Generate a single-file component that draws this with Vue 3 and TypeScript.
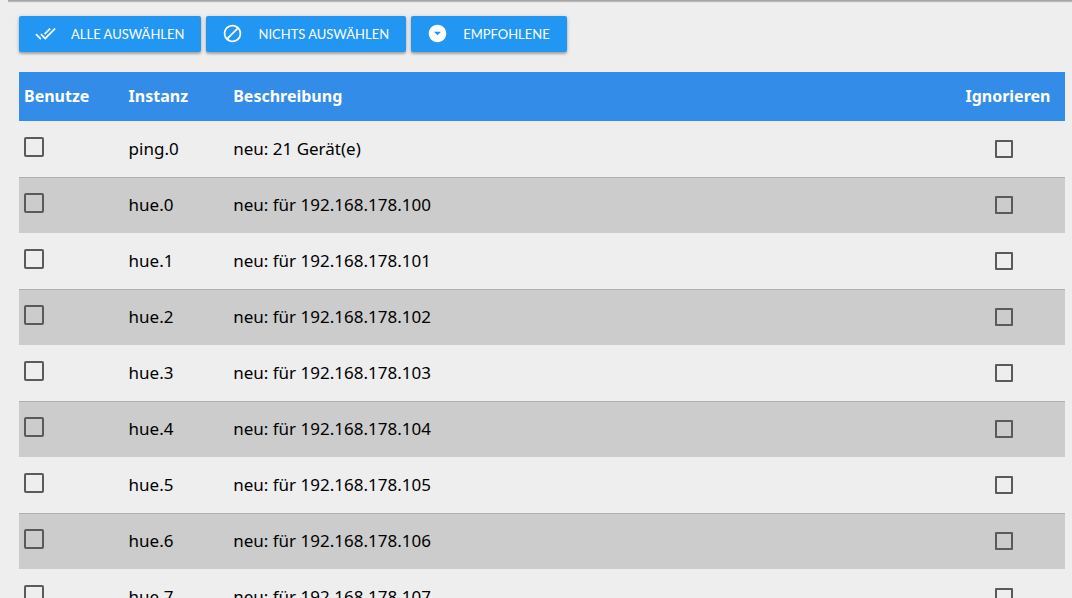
<script setup lang="ts">
import { ref } from 'vue'

interface Instance {
  id: string
  description: string
  use: boolean
  ignore: boolean
}

const makeInstance = (id: string, description: string): Instance => ({
  id,
  description,
  use: false,
  ignore: false,
})

const instances = ref<Instance[]>([
  makeInstance('ping.0', 'neu: 21 Gerät(e)'),
  ...Array.from({ length: 8 }, (_, i) => makeInstance(`hue.${i}`, `neu: für 192.168.178.${100 + i}`)),
])

function setAll(use: boolean): void {
  instances.value.forEach((item) => {
    item.use = use && !item.ignore
  })
}
</script>

<template>
  <main class="page">
    <div class="edge"></div>
    <div class="toolbar">
      <button type="button" class="btn" @click="setAll(true)">
        <svg class="icon" viewBox="0 0 24 24" aria-hidden="true">
          <path d="M18 7l-1.41-1.41-6.34 6.34 1.41 1.41L18 7zm4.24-1.41L11.66 16.17 7.48 12l-1.41 1.41L11.66 19l12-12-1.42-1.41zM.41 13.41L6 19l1.41-1.41L1.83 12 .41 13.41z" />
        </svg>
        <span>ALLE AUSWÄHLEN</span>
      </button>
      <button type="button" class="btn" @click="setAll(false)">
        <svg class="icon" viewBox="0 0 24 24" aria-hidden="true">
          <path d="M12 2C6.48 2 2 6.48 2 12s4.48 10 10 10 10-4.48 10-10S17.52 2 12 2zM4 12c0-4.42 3.58-8 8-8 1.85 0 3.55.63 4.9 1.69L5.69 16.9C4.63 15.55 4 13.85 4 12zm8 8c-1.85 0-3.55-.63-4.9-1.69L18.31 7.1C19.37 8.45 20 10.15 20 12c0 4.42-3.58 8-8 8z" />
        </svg>
        <span>NICHTS AUSWÄHLEN</span>
      </button>
      <button type="button" class="btn" @click="setAll(true)">
        <svg class="icon" viewBox="0 0 24 24" aria-hidden="true">
          <path fill-rule="evenodd" d="M12 2C6.48 2 2 6.48 2 12s4.48 10 10 10 10-4.48 10-10S17.52 2 12 2zm0 12l-4-4h8l-4 4z" />
        </svg>
        <span>EMPFOHLENE</span>
      </button>
    </div>
    <table class="list">
      <thead>
        <tr>
          <th class="narrow">Benutze</th>
          <th class="narrow">Instanz</th>
          <th>Beschreibung</th>
          <th class="narrow">Ignorieren</th>
        </tr>
      </thead>
      <tbody>
        <tr v-for="item in instances" :key="item.id">
          <td><input v-model="item.use" type="checkbox" class="check use" :aria-label="`${item.id} benutzen`" /></td>
          <td>{{ item.id }}</td>
          <td>{{ item.description }}</td>
          <td class="ignore-cell"><input v-model="item.ignore" type="checkbox" class="check ignore" :aria-label="`${item.id} ignorieren`" /></td>
        </tr>
      </tbody>
    </table>
  </main>
</template>

<style>
html,
body {
  background: #eee;
}
</style>

<style scoped>
.page {
  height: 100vh;
  overflow: hidden;
  background: #eee;
  color: #000;
  font-family: "Noto Sans", "Open Sans", sans-serif;
  font-size: 16px;
}

.edge {
  height: 1px;
  margin-left: 8px;
  background: #a6a6a6;
  box-shadow: 0 1px 1px #aaa;
}

.toolbar {
  display: flex;
  gap: 5px;
  margin: 15px 7px 20px 19px;
}

.btn {
  display: flex;
  align-items: center;
  gap: 15px;
  height: 36px;
  padding: 0 17px 0 16px;
  border: 0;
  border-radius: 2px;
  background: #2196f3;
  box-shadow: 0 2px 2px rgba(0, 0, 0, 0.2), 0 1px 4px rgba(0, 0, 0, 0.2);
  color: #fff;
  font-family: Lato, "Noto Sans", sans-serif;
  font-size: 13px;
  white-space: nowrap;
  cursor: pointer;
}

.icon {
  width: 21px;
  height: 21px;
  margin-bottom: 2px;
  fill: currentColor;
}

.list {
  width: calc(100% - 26px);
  margin-left: 19px;
  border-collapse: separate;
  border-spacing: 0;
  table-layout: fixed;
}

.narrow {
  width: 10%;
}

th,
td {
  box-sizing: border-box;
  padding: 0 5px 2px;
  text-align: left;
  vertical-align: middle;
  white-space: nowrap;
}

th {
  height: 49px;
  background: #338de8;
  color: #fff;
  font-weight: 700;
}

td {
  height: 56px;
  font-size: 17px;
}

tbody tr:nth-child(even) td {
  background: #ccc;
  box-shadow: inset 0 1px #b0b0b0;
}

.check {
  appearance: none;
  display: block;
  box-sizing: border-box;
  margin: 0;
  border: 2px solid #5a5a5a;
  border-radius: 2px;
}

.check:checked {
  background: #2196f3;
}

.use {
  width: 20px;
  height: 20px;
  margin-bottom: 2px;
}

.ignore {
  width: 18px;
  height: 18px;
  margin-top: 2px;
  border-radius: 1px;
}

.ignore-cell {
  padding-left: 35px;
}
</style>
